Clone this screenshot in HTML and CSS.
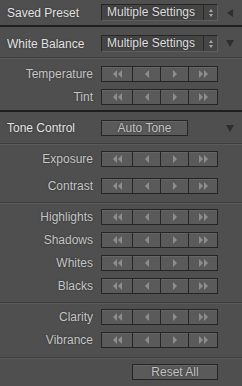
FILE: index.html
```html
<!DOCTYPE html>
<html lang="en">
<head>
    <meta charset="UTF-8">
    <meta name="viewport" content="width=device-width, initial-scale=1.0">
    <title>Quick Develop</title>
    <link rel="stylesheet" href="styles.css">
</head>
<body>

<div class="panel">
    <div class="head-row row-preset">
        <span class="head-label">Saved Preset</span>
        <div class="select">
            <span class="select-text">Multiple Settings</span>
            <span class="spin"><i class="spin-up"></i><i class="spin-down"></i></span>
        </div>
        <span class="caret caret-left"></span>
    </div>
    <div class="rule-dark"></div>

    <div class="head-row row-wb">
        <span class="head-label">White Balance</span>
        <div class="select">
            <span class="select-text">Multiple Settings</span>
            <span class="spin"><i class="spin-up"></i><i class="spin-down"></i></span>
        </div>
        <span class="caret caret-down"></span>
    </div>
    <div class="rule"></div>

    <div class="group group-wb">
        <div class="slider-row">
            <span class="label">Temperature</span>
            <div class="stepper">
                <span class="seg seg-1"><i class="tri tri-l"></i><i class="tri tri-l"></i></span>
                <span class="seg seg-2"><i class="tri tri-l"></i></span>
                <span class="seg seg-3"><i class="tri tri-r"></i></span>
                <span class="seg seg-4"><i class="tri tri-r"></i><i class="tri tri-r"></i></span>
            </div>
        </div>
        <div class="slider-row">
            <span class="label">Tint</span>
            <div class="stepper">
                <span class="seg seg-1"><i class="tri tri-l"></i><i class="tri tri-l"></i></span>
                <span class="seg seg-2"><i class="tri tri-l"></i></span>
                <span class="seg seg-3"><i class="tri tri-r"></i></span>
                <span class="seg seg-4"><i class="tri tri-r"></i><i class="tri tri-r"></i></span>
            </div>
        </div>
    </div>
    <div class="rule-dark"></div>

    <div class="head-row row-tone">
        <span class="head-label">Tone Control</span>
        <button class="btn btn-auto">Auto Tone</button>
        <span class="caret caret-down"></span>
    </div>
    <div class="rule"></div>

    <div class="group group-exposure">
        <div class="slider-row">
            <span class="label">Exposure</span>
            <div class="stepper">
                <span class="seg seg-1"><i class="tri tri-l"></i><i class="tri tri-l"></i></span>
                <span class="seg seg-2"><i class="tri tri-l"></i></span>
                <span class="seg seg-3"><i class="tri tri-r"></i></span>
                <span class="seg seg-4"><i class="tri tri-r"></i><i class="tri tri-r"></i></span>
            </div>
        </div>
        <div class="slider-row">
            <span class="label">Contrast</span>
            <div class="stepper">
                <span class="seg seg-1"><i class="tri tri-l"></i><i class="tri tri-l"></i></span>
                <span class="seg seg-2"><i class="tri tri-l"></i></span>
                <span class="seg seg-3"><i class="tri tri-r"></i></span>
                <span class="seg seg-4"><i class="tri tri-r"></i><i class="tri tri-r"></i></span>
            </div>
        </div>
    </div>
    <div class="rule"></div>

    <div class="group group-tones">
        <div class="slider-row">
            <span class="label">Highlights</span>
            <div class="stepper">
                <span class="seg seg-1"><i class="tri tri-l"></i><i class="tri tri-l"></i></span>
                <span class="seg seg-2"><i class="tri tri-l"></i></span>
                <span class="seg seg-3"><i class="tri tri-r"></i></span>
                <span class="seg seg-4"><i class="tri tri-r"></i><i class="tri tri-r"></i></span>
            </div>
        </div>
        <div class="slider-row">
            <span class="label">Shadows</span>
            <div class="stepper">
                <span class="seg seg-1"><i class="tri tri-l"></i><i class="tri tri-l"></i></span>
                <span class="seg seg-2"><i class="tri tri-l"></i></span>
                <span class="seg seg-3"><i class="tri tri-r"></i></span>
                <span class="seg seg-4"><i class="tri tri-r"></i><i class="tri tri-r"></i></span>
            </div>
        </div>
        <div class="slider-row">
            <span class="label">Whites</span>
            <div class="stepper">
                <span class="seg seg-1"><i class="tri tri-l"></i><i class="tri tri-l"></i></span>
                <span class="seg seg-2"><i class="tri tri-l"></i></span>
                <span class="seg seg-3"><i class="tri tri-r"></i></span>
                <span class="seg seg-4"><i class="tri tri-r"></i><i class="tri tri-r"></i></span>
            </div>
        </div>
        <div class="slider-row">
            <span class="label">Blacks</span>
            <div class="stepper">
                <span class="seg seg-1"><i class="tri tri-l"></i><i class="tri tri-l"></i></span>
                <span class="seg seg-2"><i class="tri tri-l"></i></span>
                <span class="seg seg-3"><i class="tri tri-r"></i></span>
                <span class="seg seg-4"><i class="tri tri-r"></i><i class="tri tri-r"></i></span>
            </div>
        </div>
    </div>
    <div class="rule"></div>

    <div class="group group-presence">
        <div class="slider-row">
            <span class="label">Clarity</span>
            <div class="stepper">
                <span class="seg seg-1"><i class="tri tri-l"></i><i class="tri tri-l"></i></span>
                <span class="seg seg-2"><i class="tri tri-l"></i></span>
                <span class="seg seg-3"><i class="tri tri-r"></i></span>
                <span class="seg seg-4"><i class="tri tri-r"></i><i class="tri tri-r"></i></span>
            </div>
        </div>
        <div class="slider-row">
            <span class="label">Vibrance</span>
            <div class="stepper">
                <span class="seg seg-1"><i class="tri tri-l"></i><i class="tri tri-l"></i></span>
                <span class="seg seg-2"><i class="tri tri-l"></i></span>
                <span class="seg seg-3"><i class="tri tri-r"></i></span>
                <span class="seg seg-4"><i class="tri tri-r"></i><i class="tri tri-r"></i></span>
            </div>
        </div>
    </div>
    <div class="rule"></div>

    <div class="group group-reset">
        <button class="btn btn-reset">Reset All</button>
    </div>
</div>

</body>
</html>
```

FILE: styles.css
```css
/* Base */
body {
    margin: 0;
    padding: 0;
    background: #4f4f4f;
    font-family: "Liberation Sans", Arial, sans-serif;
    font-size: 12px;
}

.panel {
    width: 242px;
    height: 386px;
    overflow: hidden;
    background: #4f4f4f;
}

/* Separators */
.rule-dark {
    height: 2px;
    background: #1e1e1e;
}

.rule {
    height: 1px;
    background: #3d3d3d;
    border-bottom: 1px solid #5b5b5b;
}

/* Header rows */
.head-row {
    display: flex;
    align-items: center;
    padding-left: 7px;
    box-sizing: border-box;
}

.row-preset {
    height: 25px;
}

.row-wb {
    padding-top: 8px;
    padding-bottom: 5px;
}

.row-tone {
    padding-top: 8px;
    padding-bottom: 7px;
}

.head-label {
    width: 94px;
    color: #e4e4e4;
    text-shadow: 0 0 2px #2a2a2a;
}

/* Dropdown */
.select {
    display: flex;
    width: 117px;
    height: 17px;
    box-sizing: border-box;
    border: 1px solid #262626;
    border-right-color: #5e5e5e;
    border-bottom-color: #5e5e5e;
    background: #454545;
}

.select-text {
    flex: 1;
    padding-left: 5px;
    line-height: 15px;
    color: #dedede;
    text-shadow: 0 0 2px #2a2a2a;
}

.spin {
    width: 13px;
    border-left: 1px solid #2a2a2a;
    display: flex;
    flex-direction: column;
    align-items: center;
    justify-content: center;
    gap: 2px;
}

.spin i {
    width: 0;
    height: 0;
    border-left: 2px solid transparent;
    border-right: 2px solid transparent;
}

.spin-up {
    border-bottom: 3px solid #a8a8a8;
}

.spin-down {
    border-top: 3px solid #a8a8a8;
}

/* Collapse carets */
.caret {
    margin-left: auto;
    width: 0;
    height: 0;
}

.caret-left {
    margin-right: 9px;
    border-top: 4px solid transparent;
    border-bottom: 4px solid transparent;
    border-right: 6px solid #2e2e2e;
}

.caret-down {
    margin-right: 8px;
    border-left: 4px solid transparent;
    border-right: 4px solid transparent;
    border-top: 7px solid #2e2e2e;
}

/* Slider groups */
.group {
    display: flex;
    flex-direction: column;
    gap: 7px;
}

.group-wb {
    padding: 7px 0 5px;
}

.group-exposure {
    padding: 6px 0 8px;
    gap: 11px;
}

.group-tones {
    padding: 5px 0 8px;
}

.group-presence {
    padding: 5px 0 9px;
}

.group-reset {
    padding-top: 5px;
}

.slider-row {
    display: flex;
    align-items: center;
}

.label {
    width: 93px;
    margin-right: 8px;
    text-align: right;
    color: #c6c6c6;
    text-shadow: 0 0 2px #2a2a2a;
}

/* Four part stepper */
.stepper {
    display: flex;
    width: 117px;
    height: 16px;
    box-sizing: border-box;
    border: 1px solid #252525;
    background: #252525;
    gap: 1px;
}

.seg {
    display: flex;
    align-items: center;
    justify-content: center;
    gap: 1px;
    background: #5a5a5a;
    box-shadow: inset 0 1px 0 #656565;
}

.seg-1 { width: 30px; }
.seg-2 { width: 27px; }
.seg-3 { width: 27px; }
.seg-4 { width: 28px; }

.tri {
    width: 0;
    height: 0;
    border-top: 4px solid transparent;
    border-bottom: 4px solid transparent;
}

.tri-l {
    border-right: 4px solid #8d8d8d;
}

.tri-r {
    border-left: 4px solid #8d8d8d;
}

/* Buttons */
.btn {
    height: 16px;
    padding: 0;
    box-sizing: border-box;
    border: 1px solid #252525;
    background: #5a5a5a;
    box-shadow: inset 0 1px 0 #656565;
    color: #c4c4c4;
    font-family: "Liberation Sans", Arial, sans-serif;
    font-size: 12px;
    line-height: 14px;
    text-shadow: 0 0 2px #2a2a2a;
}

.btn-auto {
    width: 87px;
}

.btn-reset {
    width: 86px;
    margin-left: 132px;
}
```
